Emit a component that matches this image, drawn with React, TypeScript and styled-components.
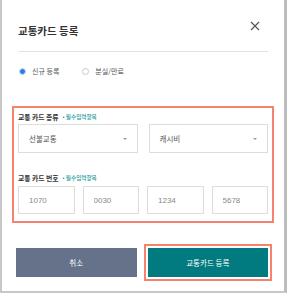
import React, { useState } from 'react';
import styled, { createGlobalStyle } from 'styled-components';

const GlobalStyle = createGlobalStyle`
  html, body {
    margin: 0;
    padding: 0;
    background: #fff;
  }
  body {
    font-family: "Noto Sans CJK KR", "Liberation Sans", sans-serif;
    color: #333;
  }
`;

const Frame = styled.div`
  box-sizing: border-box;
  width: 287px;
  height: 293px;
  border-left: 2px solid #c8c8c8;
  border-right: 3px solid #bdbdbd;
  border-bottom: 2px solid #c8c8c8;
  padding: 0 14px;
  display: flex;
  flex-direction: column;
  background: #fff;
`;

const Header = styled.div`
  display: flex;
  justify-content: space-between;
  padding-top: 24px;
  padding-bottom: 13px;
  border-bottom: 1px solid #e2e2e2;
  margin: 0 2px;
`;

const Title = styled.h1`
  margin: 0;
  font-size: 10.5px;
  line-height: 14px;
  font-weight: 700;
  color: #333;
`;

const CloseButton = styled.button`
  border: none;
  background: none;
  padding: 0;
  margin: -3px 8px 0 0;
  width: 10px;
  height: 10px;
  display: flex;
  cursor: pointer;
`;

const RadioRow = styled.div`
  display: flex;
  gap: 22px;
  margin: 12px 2px 0;
  height: 14px;
  align-items: center;
`;

const RadioLabel = styled.label`
  display: flex;
  align-items: center;
  gap: 6px;
  font-size: 7px;
  color: #555;
  cursor: pointer;
`;

const RadioDot = styled.span<{ $checked: boolean }>`
  box-sizing: border-box;
  width: 7px;
  height: 7px;
  border-radius: 50%;
  margin-left: 1px;
  border: ${p => (p.$checked ? '1px solid #cfe2fb' : '1px solid #c9c9c9')};
  background: ${p => (p.$checked ? '#2a7de1' : '#fff')};
`;

const RequiredBox = styled.div`
  margin: 28px -4px 0;
  border: 2px solid #f5826f;
  padding: 2px 4px 7px;
`;

const FieldLabel = styled.div<{ $gap: number }>`
  display: flex;
  align-items: center;
  gap: 4px;
  margin-top: ${p => p.$gap}px;
  height: 10px;
  font-size: 6.8px;
  font-weight: 700;
  color: #333;
`;

const Required = styled.span`
  font-size: 5.6px;
  font-weight: 500;
  color: #1b9a98;
`;

const Row = styled.div<{ $cols: number; $gap: number; $top: number }>`
  display: grid;
  grid-template-columns: repeat(${p => p.$cols}, 1fr);
  gap: ${p => p.$gap}px;
  margin-top: ${p => p.$top}px;
`;

const SelectBox = styled.div`
  box-sizing: border-box;
  height: 29px;
  border: 1px solid #dcdcdc;
  display: flex;
  align-items: center;
  justify-content: space-between;
  padding: 0 10px;
  font-size: 7.5px;
  color: #555;
`;

const Caret = styled.span`
  width: 0;
  height: 0;
  border-left: 2.5px solid transparent;
  border-right: 2.5px solid transparent;
  border-top: 2.5px solid #9a9a9a;
`;

const NumberInput = styled.input`
  box-sizing: border-box;
  width: 100%;
  height: 28px;
  border: 1px solid #dcdcdc;
  padding: 0 10px;
  font-family: "Liberation Sans", Arial, sans-serif;
  font-size: 8px;
  color: #888;
  outline: none;
`;

const ButtonRow = styled.div`
  display: grid;
  grid-template-columns: 1fr 1fr;
  gap: 11px;
  margin: 25px 2px 0 0;
`;

const Button = styled.button<{ $primary?: boolean }>`
  height: 29px;
  border: none;
  font-family: "Noto Sans CJK KR", sans-serif;
  font-size: 7.5px;
  color: #fff;
  background: ${p => (p.$primary ? '#027b80' : '#66718a')};
  outline: ${p => (p.$primary ? '2px solid #f5826f' : 'none')};
  outline-offset: 2px;
  cursor: pointer;
`;

export default function App() {
  const [mode, setMode] = useState<'new' | 'lost'>('new');
  const numbers = ['1070', '0030', '1234', '5678'];

  return (
    <Frame>
      <GlobalStyle />
      <Header>
        <Title>교통카드 등록</Title>
        <CloseButton aria-label="닫기">
          <svg width="10" height="10" viewBox="0 0 10 10">
            <path d="M1 1 L9 9 M9 1 L1 9" stroke="#555" strokeWidth="1.2" />
          </svg>
        </CloseButton>
      </Header>

      <RadioRow>
        <RadioLabel onClick={() => setMode('new')}>
          <RadioDot $checked={mode === 'new'} />
          신규 등록
        </RadioLabel>
        <RadioLabel onClick={() => setMode('lost')}>
          <RadioDot $checked={mode === 'lost'} />
          분실/만료
        </RadioLabel>
      </RadioRow>

      <RequiredBox>
        <FieldLabel $gap={2}>
          교통 카드 종류 <Required>• 필수입력항목</Required>
        </FieldLabel>
        <Row $cols={2} $gap={11} $top={2}>
          <SelectBox>
            선불교통
            <Caret />
          </SelectBox>
          <SelectBox>
            캐시비
            <Caret />
          </SelectBox>
        </Row>

        <FieldLabel $gap={20}>
          교통 카드 번호 <Required>• 필수입력항목</Required>
        </FieldLabel>
        <Row $cols={4} $gap={8} $top={3}>
          {numbers.map(n => (
            <NumberInput key={n} defaultValue={n} />
          ))}
        </Row>
      </RequiredBox>

      <ButtonRow>
        <Button>취소</Button>
        <Button $primary>교통카드 등록</Button>
      </ButtonRow>
    </Frame>
  );
}
